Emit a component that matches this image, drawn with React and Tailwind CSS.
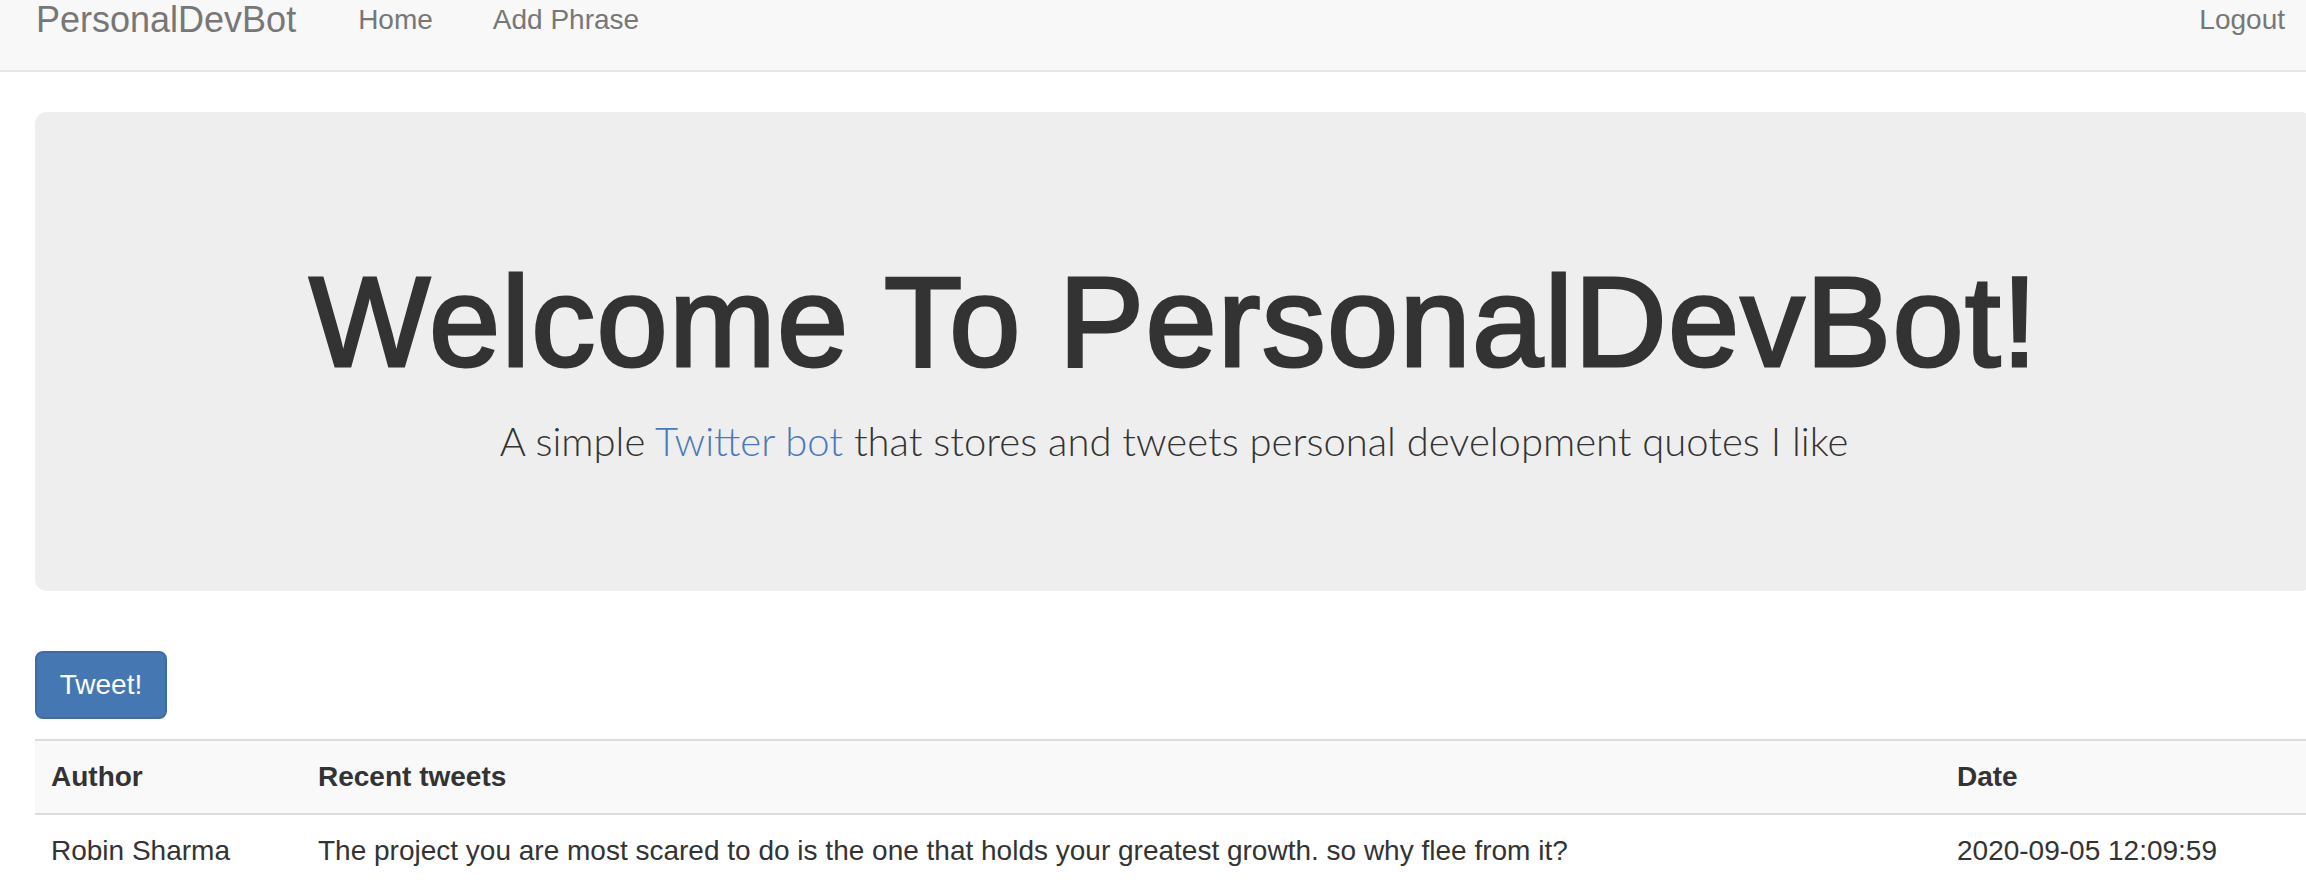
import React from 'react';

const tweets = [
  {
    author: 'Robin Sharma',
    text: 'The project you are most scared to do is the one that holds your greatest growth. so why flee from it?',
    date: '2020-09-05 12:09:59',
  },
];

const Navbar = () => (
  <div className="h-[72px] bg-[#f8f8f8] border-b-2 border-[#e7e7e7] flex items-start">
    <a className="ml-[36px] text-[36px] leading-[40px] text-[#777777]">PersonalDevBot</a>
    <a className="ml-[62px] text-[28px] leading-[40px] text-[#777777]">Home</a>
    <a className="ml-[60px] text-[28px] leading-[40px] text-[#777777]">Add Phrase</a>
    <a className="ml-auto mr-[21px] text-[28px] leading-[40px] text-[#777777]">Logout</a>
  </div>
);

const App = () => {
  return (
    <div className="w-[2306px] h-[888px] overflow-hidden bg-white text-[#333333] font-['Liberation_Sans',Arial,sans-serif]">
      <Navbar />

      <div className="ml-[35px] w-[2278px]">
        <div className="mt-[40px] h-[479px] rounded-[12px] bg-[#eeeeee] pt-[140px] text-center">
          <h1 className="text-[128px] leading-[139px] tracking-[1.3px] [-webkit-text-stroke:3px_#333333]">
            Welcome To PersonalDevBot!
          </h1>
          <p className="mt-[20px] text-[40px] leading-[60px] font-light font-['Lato','Liberation_Sans',sans-serif]">
            A simple <a className="text-[#4a7ab8]">Twitter bot</a> that stores and tweets personal development quotes I like
          </p>
        </div>

        <button className="mt-[60px] w-[132px] h-[68px] rounded-[8px] bg-[#4577b2] border-2 border-[#3f6ca5] text-white text-[28px] leading-[40px]">
          Tweet!
        </button>

        <div className="mt-[20px] border-t-2 border-[#dddddd]">
          <div className="grid grid-cols-[267px_1639px_1fr] bg-[#f9f9f9] border-b-2 border-[#dddddd] font-bold text-[28px] leading-[40px]">
            <div className="p-[16px]">Author</div>
            <div className="p-[16px]">Recent tweets</div>
            <div className="p-[16px]">Date</div>
          </div>
          {tweets.map((t) => (
            <div key={t.date} className="grid grid-cols-[267px_1639px_1fr] text-[28px] leading-[40px]">
              <div className="p-[16px]">{t.author}</div>
              <div className="p-[16px] whitespace-nowrap">{t.text}</div>
              <div className="p-[16px]">{t.date}</div>
            </div>
          ))}
        </div>
      </div>
    </div>
  );
};

export default App;
